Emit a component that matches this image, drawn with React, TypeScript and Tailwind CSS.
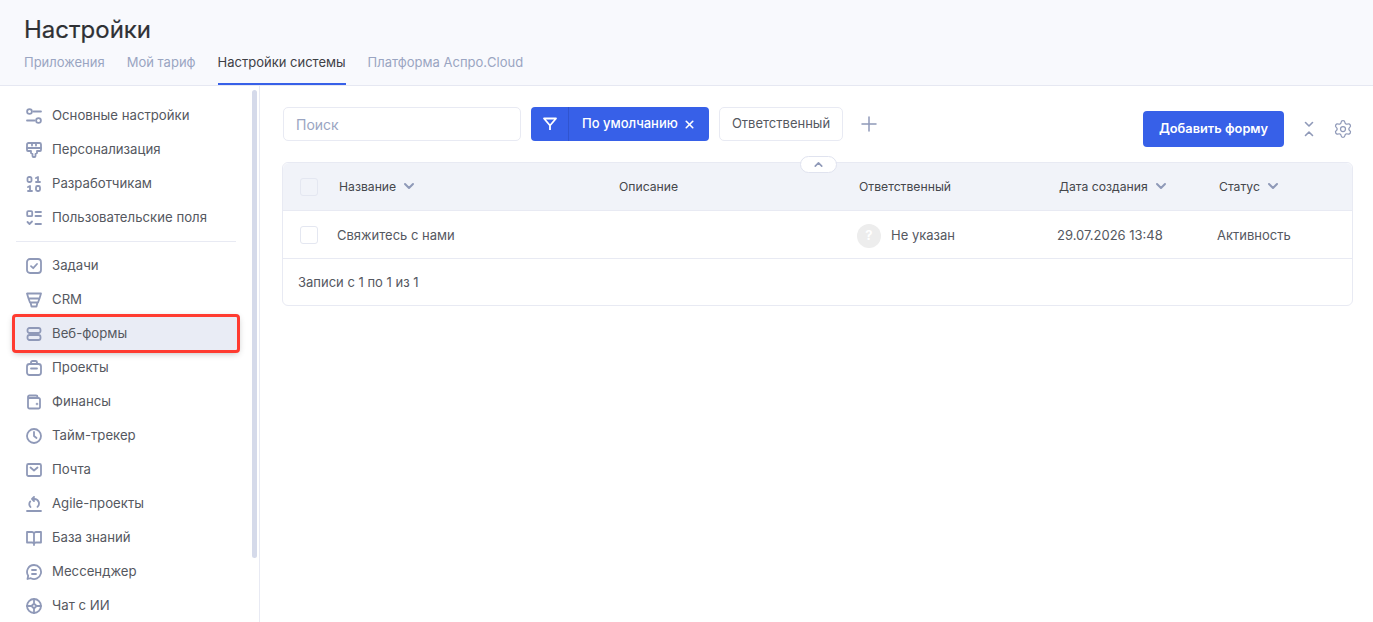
import React from 'react';
import { ChevronDown, ChevronUp, Plus, Settings, X } from 'lucide-react';

const iconClass = 'w-[16px] h-[16px] shrink-0 text-[#8f99b8]';

function Svg({ children }: { children: React.ReactNode }) {
  return (
    <svg viewBox="0 0 16 16" fill="none" stroke="currentColor" strokeWidth="1.8" strokeLinecap="round" strokeLinejoin="round" className={iconClass}>
      {children}
    </svg>
  );
}

const icons: Record<string, React.ReactNode> = {
  main: (
    <Svg>
      <circle cx="3.500" cy="3.500" r="2.400" />
      <path d="M7.500 3.500H15M1 12.500h7.500" />
      <circle cx="12.500" cy="12.500" r="2.400" />
    </Svg>
  ),
  personal: (
    <Svg>
      <path d="M2.500 1h11A1.500 1.500 0 0 1 15 2.500V8a1 1 0 0 1-1 1h-3v2l-1.500 1v2a1 1 0 0 1-1 1h-1a1 1 0 0 1-1-1v-2L5 11V9H2a1 1 0 0 1-1-1V2.500A1.500 1.500 0 0 1 2.500 1z" />
      <path d="M1 6h14M6 1v2.500M10 1v2.500" />
    </Svg>
  ),
  dev: (
    <Svg>
      <rect x="1.500" y="1" width="4" height="5" rx="1.500" />
      <path d="M10 2l2-1v5M10 6h4" />
      <path d="M2 11l2-1v5M2 15h4" />
      <rect x="10" y="10" width="4" height="5" rx="1.500" />
    </Svg>
  ),
  fields: (
    <Svg>
      <rect x="1.200" y="1.200" width="5" height="5" rx="1" />
      <path d="M9.500 2H15M9.500 6H15M9.500 14H15M1.500 12l2 2 2.500-2.500" />
    </Svg>
  ),
  tasks: (
    <Svg>
      <rect x="1" y="1" width="14" height="14" rx="3" />
      <path d="M5 8.200l2.200 2L11 6" />
    </Svg>
  ),
  crm: (
    <Svg>
      <path d="M1 1.500h14l-1.500 5h-11zM2.500 6.500l1.500 4h8l1.500-4M4.500 10.500l1 4h5l1-4" />
    </Svg>
  ),
  forms: (
    <Svg>
      <rect x="1.500" y="2" width="13" height="5" rx="2" />
      <rect x="1.500" y="9" width="13" height="5" rx="2" />
    </Svg>
  ),
  projects: (
    <Svg>
      <rect x="1" y="4" width="14" height="11" rx="2.500" />
      <path d="M5 4V2.500A1.500 1.500 0 0 1 6.500 1h3A1.500 1.500 0 0 1 11 2.500V4M5 8.500h6" />
    </Svg>
  ),
  finance: (
    <Svg>
      <path d="M2 5.500A1.500 1.500 0 0 1 3.500 4h9A1.500 1.500 0 0 1 14 5.500V13a1.500 1.500 0 0 1-1.500 1.500h-9A1.500 1.500 0 0 1 2 13V3a1.500 1.500 0 0 1 1.500-1.500H10A1.500 1.500 0 0 1 11.500 3v1" />
      <circle cx="11" cy="10" r=".4" />
    </Svg>
  ),
  time: (
    <Svg>
      <circle cx="8" cy="8" r="7" />
      <path d="M8 4v4l2.500 2" />
    </Svg>
  ),
  mail: (
    <Svg>
      <rect x="1" y="2" width="14" height="12" rx="1.500" />
      <path d="M4.500 5.500L8 8.500l3.500-3" />
    </Svg>
  ),
  agile: (
    <Svg>
      <path d="M1 15h14M8 1L6 3l2 2M6 3h2.500a4.500 4.500 0 0 1 3 7.800M4.200 5.500a4.500 4.500 0 0 0 .3 5.500" />
    </Svg>
  ),
  book: (
    <Svg>
      <path d="M8 3.500C8 2.500 7 2 6 2H1v10.500h5c1 0 2 .5 2 1.500 0-1 1-1.500 2-1.500h5V2h-5c-1 0-2 .5-2 1.500zM8 3.500V15" />
    </Svg>
  ),
  chat: (
    <Svg>
      <path d="M8 1a7 7 0 1 1-3.200 13.200L1.500 15l.7-3.200A7 7 0 0 1 8 1z" />
      <path d="M6 6h4M6 10h4" />
    </Svg>
  ),
  ai: (
    <Svg>
      <circle cx="8" cy="8" r="7" />
      <path d="M8 5.500L10.500 8 8 10.500 5.500 8zM8 1v4.500M8 10.500V15M1 8h4.500M10.500 8H15" />
    </Svg>
  ),
};

const topItems = [
  ['main', 'Основные настройки'],
  ['personal', 'Персонализация'],
  ['dev', 'Разработчикам'],
  ['fields', 'Пользовательские поля'],
];

const bottomItems = [
  ['tasks', 'Задачи'],
  ['crm', 'CRM'],
  ['forms', 'Веб-формы'],
  ['projects', 'Проекты'],
  ['finance', 'Финансы'],
  ['time', 'Тайм-трекер'],
  ['mail', 'Почта'],
  ['agile', 'Agile-проекты'],
  ['book', 'База знаний'],
  ['chat', 'Мессенджер'],
  ['ai', 'Чат с ИИ'],
];

function NavItem({ icon, label }: { icon: string; label: string }) {
  const active = label === 'Веб-формы';
  return (
    <div
      className={
        'shrink-0 flex items-center gap-[10px] text-[13.2px] text-[#55585f] ' +
        (active
          ? 'h-[35px] -mt-[1px] mx-[14px] pl-[12px] bg-[#e9ecf5] outline-[3px] outline-[#ff3b30] -outline-offset-1 rounded-[2px] shadow-[0_2px_7px_rgba(0,0,0,0.3)]'
          : 'h-[34px] pl-[26px]')
      }
    >
      {icons[icon]}
      <span>{label}</span>
    </div>
  );
}

function Sidebar() {
  return (
    <aside className="w-[260px] shrink-0 border-r border-[#e8eaf3] flex overflow-hidden">
      <nav className="w-[252px] shrink-0 pt-[13px] flex flex-col">
        {topItems.map(([icon, label]) => (
          <NavItem key={label} icon={icon} label={label} />
        ))}
        <div className="h-px shrink-0 bg-[#e8eaf3] mx-[16px] mt-[6px] mb-[7px]" />
        {bottomItems.map(([icon, label]) => (
          <NavItem key={label} icon={icon} label={label} />
        ))}
      </nav>
      <div className="w-[5px] h-[468px] mt-[4px] rounded-full bg-[#d5daea]" />
    </aside>
  );
}

function Header() {
  return (
    <header className="h-[86px] shrink-0 bg-[#f8f9fd] border-b border-[#e6e8f2] pl-[24px] flex flex-col">
      <h1 className="text-[24px] leading-[30px] mt-[15px] font-normal text-[#2f3135] [-webkit-text-stroke:0.2px_#2f3135]">Настройки</h1>
      <div className="flex gap-[22px] mt-[8px] text-[13px] h-[32px] text-[#9aa5c2]">
        <span>Приложения</span>
        <span>Мой тариф</span>
        <span className="text-[#3e4045] h-[32px] border-b-2 border-[#3760e8]">Настройки системы</span>
        <span>Платформа Аспро.Cloud</span>
      </div>
    </header>
  );
}

function Toolbar() {
  return (
    <div className="flex pl-[23px] pr-[20px] pt-[21px]">
      <div className="w-[238px] h-[34px] bg-white border border-[#e8eaf3] rounded-[5px] pl-[12px] flex items-center text-[14px] text-[#9aa5c2]">Поиск</div>
      <div className="ml-[10px] w-[178px] h-[34px] bg-[#3760e8] rounded-[4px] flex items-center text-white text-[13px] font-medium">
        <div className="w-[38px] h-full flex items-center justify-center border-r border-[#3054cf]">
          <svg viewBox="0 0 16 16" fill="none" stroke="currentColor" strokeWidth="1.8" strokeLinejoin="round" className="w-[16px] h-[16px]">
            <path d="M2 2.500h12L8 9.500zM8 9.500V14" />
          </svg>
        </div>
        <span className="ml-[13px]">По умолчанию</span>
        <X className="w-[13px] h-[13px] ml-[5px]" strokeWidth={3} />
      </div>
      <div className="ml-[10px] w-[124px] h-[34px] bg-white border border-[#e8eaf3] rounded-[5px] flex items-center justify-center text-[13px] text-[#55585f]">Ответственный</div>
      <Plus className="ml-[14px] mt-[5px] w-[24px] h-[24px] text-[#8f99b8]" strokeWidth={1.5} />
      <div className="ml-auto flex items-start">
        <div className="mt-[4px] w-[141px] h-[36px] bg-[#3760e8] rounded-[4px] flex items-center justify-center text-white text-[12.8px] font-semibold">Добавить форму</div>
        <svg viewBox="0 0 10 16" fill="none" stroke="currentColor" strokeWidth="1.6" strokeLinecap="round" strokeLinejoin="round" className="ml-[20px] mt-[14px] w-[10px] h-[16px] text-[#8f99b8]">
          <path d="M1.500 1.500L5 5l3.500-3.500M1.500 14.500L5 11l3.500 3.500" />
        </svg>
        <Settings className="ml-[19px] mt-[12px] w-[20px] h-[20px] text-[#8f99b8]" strokeWidth={1.5} />
      </div>
    </div>
  );
}

const gridCols = 'grid grid-cols-[39px_280px_240px_200px_160px_1fr] items-center px-[17px]';

function HeadCell({ label, sort }: { label: string; sort?: boolean }) {
  return (
    <div className="flex items-center gap-[5px]">
      <span className="pt-[2px]">{label}</span>
      {sort && <ChevronDown className="w-[16px] h-[16px] text-[#8f99b8]" strokeWidth={3} />}
    </div>
  );
}

function Table() {
  return (
    <div className="relative mt-[15px] ml-[22px] mr-[20px] border border-[#e8eaf3] rounded-[6px] text-[13px] text-[#55585f]">
      <div className="absolute left-[517px] -top-[7px] w-[37px] h-[17px] bg-white border border-[#e0e3ef] rounded-full flex items-center justify-center">
        <ChevronUp className="w-[13px] h-[13px] text-[#8f99b8]" strokeWidth={3} />
      </div>
      <div className={gridCols + ' h-[48px] bg-[#f1f3f9] border-b border-[#e8eaf3] rounded-t-[6px] text-[12.2px] text-[#45474c]'}>
        <div className="w-[18px] h-[18px] border border-[#e4e7f1] rounded-[3px]" />
        <HeadCell label="Название" sort />
        <HeadCell label="Описание" />
        <HeadCell label="Ответственный" />
        <HeadCell label="Дата создания" sort />
        <HeadCell label="Статус" sort />
      </div>
      <div className={gridCols + ' h-[48px] border-b border-[#e8eaf3]'}>
        <div className="w-[18px] h-[18px] bg-white border border-[#e4e7f1] rounded-[3px]" />
        <div className="-ml-[2px] pt-[2px]">Свяжитесь с нами</div>
        <div />
        <div className="-ml-[2px] pt-[2px] flex items-center gap-[10px]">
          <div className="w-[24px] h-[24px] rounded-full bg-[#ededed] flex items-center justify-center text-white font-bold">?</div>
          <span>Не указан</span>
        </div>
        <div className="-ml-[2px] pt-[2px]">29.07.2026 13:48</div>
        <div className="-ml-[2px] pt-[2px]">Активность</div>
      </div>
      <div className="h-[46px] pl-[15px] pt-[2px] flex items-center">Записи с 1 по 1 из 1</div>
    </div>
  );
}

export default function App() {
  return (
    <div className="h-screen overflow-hidden flex flex-col bg-white font-['Inter',sans-serif]">
      <Header />
      <div className="flex flex-1 min-h-0">
        <Sidebar />
        <main className="flex-1 min-w-0">
          <Toolbar />
          <Table />
        </main>
      </div>
    </div>
  );
}
